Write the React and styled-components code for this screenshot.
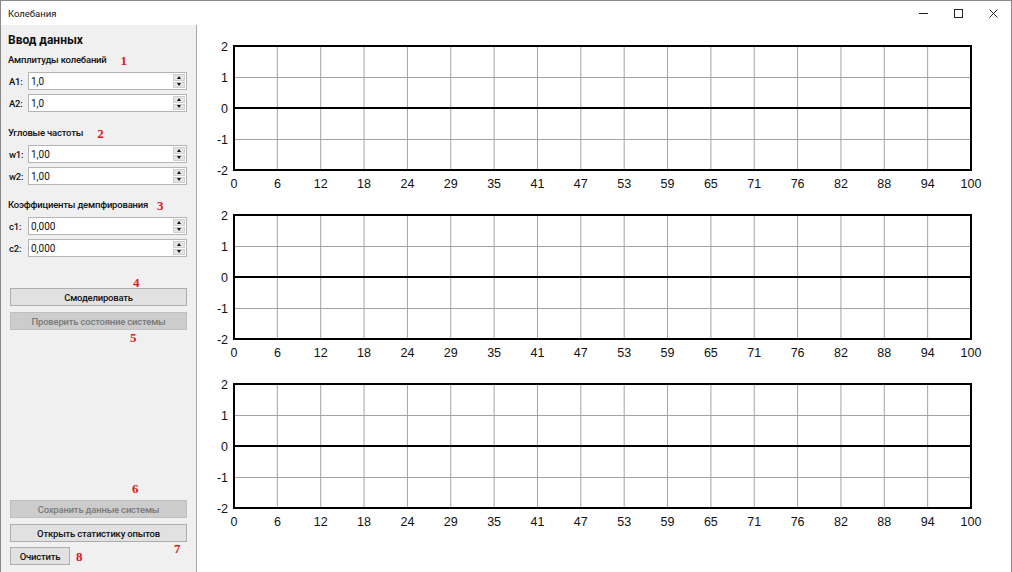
import React from "react";
import styled, { createGlobalStyle, css } from "styled-components";

const Global = createGlobalStyle`
  html, body { margin: 0; padding: 0; background: #fff; }
  body { font-family: Roboto, "Noto Sans", sans-serif; }
  * { box-sizing: border-box; }
`;

const Window = styled.div`
  width: 1012px;
  height: 572px;
  display: flex;
  flex-direction: column;
  background: #fff;
  border: 1px solid #8a8a8a;
  border-bottom: none;
  overflow: hidden;
`;

const TitleBar = styled.div`
  height: 24px;
  flex: none;
  display: flex;
  align-items: center;
  padding-left: 7px;
  font-size: 9.5px;
  color: #111;
`;

const TitleText = styled.span`
  flex: 1;
`;

const WinButton = styled.div`
  width: 35px;
  height: 24px;
  display: flex;
  align-items: center;
  justify-content: center;
`;

const Body = styled.div`
  flex: 1;
  display: flex;
  min-height: 0;
`;

const Panel = styled.div`
  width: 196px;
  flex: none;
  background: #f0f0f0;
  border-right: 1px solid #a8a8a8;
  display: flex;
  flex-direction: column;
  padding: 6px 9px 7px 7px;
  position: relative;
  letter-spacing: -0.2px;
`;

const PanelTitle = styled.div`
  font-size: 12px;
  font-weight: 700;
  line-height: 18px;
  color: #111;
  white-space: nowrap;
  letter-spacing: 0;
`;

const SectionHeader = styled.div`
  display: flex;
  align-items: center;
  white-space: nowrap;
  font-size: 9.5px;
  font-weight: 500;
  line-height: 16px;
  color: #111;
  margin-top: ${(p) => p.$mt}px;
  margin-bottom: 4px;
`;

const Mark = styled.span`
  font-family: "Liberation Serif", "DejaVu Serif", serif;
  font-weight: 700;
  font-size: 13px;
  letter-spacing: 0;
  color: #e0141c;
  margin-left: ${(p) => p.$ml || 0}px;
  line-height: 1;
`;

const FloatMark = styled(Mark)`
  position: absolute;
  left: ${(p) => p.$x}px;
  top: ${(p) => p.$y}px;
`;

const FieldRow = styled.div`
  display: flex;
  align-items: center;
  height: 18px;
  margin-bottom: 4px;
`;

const FieldLabel = styled.span`
  width: 20px;
  flex: none;
  font-size: 9.5px;
  font-weight: 500;
  color: #111;
  padding-left: 1px;
`;

const InputBox = styled.div`
  flex: 1;
  height: 18px;
  background: #fff;
  border: 1px solid #b4b4b4;
  display: flex;
  align-items: center;
  padding-left: 2px;
  font-size: 10px;
  letter-spacing: 0;
  color: #111;
`;

const InputValue = styled.span`
  flex: 1;
`;

const Spinner = styled.div`
  width: 12px;
  height: 14px;
  margin-right: 1px;
  display: flex;
  flex-direction: column;
  gap: 1px;
`;

const SpinBtn = styled.div`
  flex: 1;
  background: #e4e4e4;
  border: 1px solid #cfcfcf;
  display: flex;
  align-items: center;
  justify-content: center;
`;

const Arrow = styled.span`
  width: 0;
  height: 0;
  border-left: 2.5px solid transparent;
  border-right: 2.5px solid transparent;
  ${(p) =>
    p.$down
      ? css`border-top: 3px solid #111;`
      : css`border-bottom: 3px solid #111;`}
`;

const Button = styled.div`
  height: 18px;
  width: ${(p) => (p.$w ? `${p.$w}px` : "auto")};
  margin-left: 2px;
  display: flex;
  align-items: center;
  justify-content: center;
  white-space: nowrap;
  font-size: 9.5px;
  font-weight: 500;
  border: 1px solid ${(p) => (p.$disabled ? "#bfbfbf" : "#adadad")};
  background: ${(p) => (p.$disabled ? "#cccccc" : "#e1e1e1")};
  color: ${(p) => (p.$disabled ? "#7a7a7a" : "#111")};
  margin-top: ${(p) => p.$mt || 0}px;
`;

const Spacer = styled.div`
  flex: 1;
`;

const ButtonLine = styled.div`
  display: flex;
  align-items: center;
  margin-top: 5px;
`;

const Charts = styled.div`
  flex: 1;
  display: flex;
  flex-direction: column;
  padding-top: 12px;
`;

const ChartSvg = styled.svg`
  display: block;
  font-family: "Liberation Sans", Arial, sans-serif;
  font-size: 12.5px;
  fill: #111;
`;

const PLOT_X = 37;
const PLOT_W = 737;
const PLOT_Y = 9;
const PLOT_H = 124;
const N = 17;

function Chart() {
  const xs = [];
  for (let i = 0; i <= N; i++) xs.push(PLOT_X + (PLOT_W * i) / N);
  const ys = [2, 1, 0, -1, -2];
  return (
    <ChartSvg width={813} height={169} viewBox="0 0 813 169">
      {xs.slice(1, -1).map((x, i) => (
        <line key={"v" + i} x1={x} x2={x} y1={PLOT_Y} y2={PLOT_Y + PLOT_H} stroke="#a3a3a3" strokeWidth="1" />
      ))}
      {[1, 3].map((k) => (
        <line key={"h" + k} x1={PLOT_X} x2={PLOT_X + PLOT_W} y1={PLOT_Y + (PLOT_H * k) / 4 + 0.5} y2={PLOT_Y + (PLOT_H * k) / 4 + 0.5} stroke="#a3a3a3" strokeWidth="1" />
      ))}
      <line x1={PLOT_X} x2={PLOT_X + PLOT_W} y1={PLOT_Y + PLOT_H / 2} y2={PLOT_Y + PLOT_H / 2} stroke="#000" strokeWidth="2" />
      <rect x={PLOT_X} y={PLOT_Y} width={PLOT_W} height={PLOT_H} fill="none" stroke="#000" strokeWidth="2" />
      {ys.map((v, i) => (
        <text key={"y" + v} x={31} y={PLOT_Y + (PLOT_H * i) / 4 + 4.5} textAnchor="end">
          {v}
        </text>
      ))}
      {xs.map((x, i) => (
        <text key={"x" + i} x={x} y={151} textAnchor="middle">
          {Math.round((100 * i) / N)}
        </text>
      ))}
    </ChartSvg>
  );
}

function Field({ label, value }) {
  return (
    <FieldRow>
      <FieldLabel>{label}</FieldLabel>
      <InputBox>
        <InputValue>{value}</InputValue>
        <Spinner>
          <SpinBtn><Arrow /></SpinBtn>
          <SpinBtn><Arrow $down /></SpinBtn>
        </Spinner>
      </InputBox>
    </FieldRow>
  );
}

export default function App() {
  return (
    <>
      <Global />
      <Window>
        <TitleBar>
          <TitleText>Колебания</TitleText>
          <WinButton>
            <svg width="9" height="9" viewBox="0 0 9 9"><line x1="0" y1="4.5" x2="9" y2="4.5" stroke="#222" strokeWidth="1" /></svg>
          </WinButton>
          <WinButton>
            <svg width="9" height="9" viewBox="0 0 9 9"><rect x="0.5" y="0.5" width="8" height="8" fill="none" stroke="#222" strokeWidth="1" /></svg>
          </WinButton>
          <WinButton>
            <svg width="9" height="9" viewBox="0 0 9 9"><path d="M0.5 0.5 L8.5 8.5 M8.5 0.5 L0.5 8.5" stroke="#222" strokeWidth="1" /></svg>
          </WinButton>
        </TitleBar>
        <Body>
          <Panel>
            <PanelTitle>Ввод данных</PanelTitle>
            <SectionHeader $mt={3}>
              Амплитуды колебаний<Mark $ml={14}>1</Mark>
            </SectionHeader>
            <Field label="A1:" value="1,0" />
            <Field label="A2:" value="1,0" />
            <SectionHeader $mt={9}>
              Угловые частоты<Mark $ml={14}>2</Mark>
            </SectionHeader>
            <Field label="w1:" value="1,00" />
            <Field label="w2:" value="1,00" />
            <SectionHeader $mt={8}>
              Коэффициенты демпфирования<Mark $ml={9}>3</Mark>
            </SectionHeader>
            <Field label="c1:" value="0,000" />
            <Field label="c2:" value="0,000" />
            <Button $mt={27}>Смоделировать</Button>
            <Button $mt={6} $disabled>Проверить состояние системы</Button>
            <Spacer />
            <Button $disabled>Сохранить данные системы</Button>
            <Button $mt={6}>Открыть статистику опытов</Button>
            <ButtonLine>
              <Button $w={60}>Очистить</Button>
              <Mark $ml={6}>8</Mark>
            </ButtonLine>
            <FloatMark $x={132} $y={251}>4</FloatMark>
            <FloatMark $x={129} $y={306}>5</FloatMark>
            <FloatMark $x={131} $y={457}>6</FloatMark>
            <FloatMark $x={173} $y={517}>7</FloatMark>
          </Panel>
          <Charts>
            <Chart />
            <Chart />
            <Chart />
          </Charts>
        </Body>
      </Window>
    </>
  );
}
